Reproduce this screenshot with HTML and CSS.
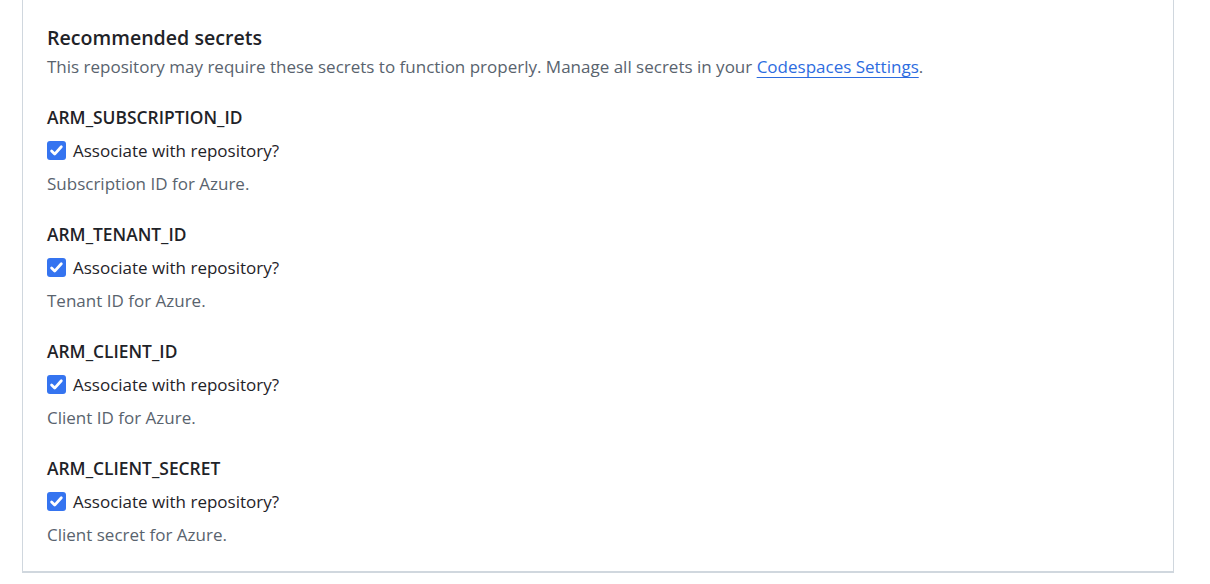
FILE: index.html
```html
<!DOCTYPE html>
<html lang="en">
<head>
<meta charset="utf-8">
<title>Recommended secrets</title>
<link rel="stylesheet" href="styles.css">
</head>
<body>
<div class="panel">
  <section class="secrets">
    <h3 class="secrets-title">Recommended secrets</h3>
    <p class="secrets-desc">This repository may require these secrets to function properly. Manage all secrets in your <a class="link" href="#">Codespaces Settings</a>.</p>
    <ul class="secret-list">
      <li class="secret">
        <div class="secret-name">ARM_SUBSCRIPTION_ID</div>
        <label class="check-row"><span class="checkbox"><svg viewBox="0 0 19 19" width="19" height="19"><path d="M4.6 10l3.1 3.1 6.6-7.4" fill="none" stroke="#fff" stroke-width="2.8" stroke-linecap="round" stroke-linejoin="round"/></svg></span><span class="check-label">Associate with repository?</span></label>
        <div class="secret-help">Subscription ID for Azure.</div>
      </li>
      <li class="secret">
        <div class="secret-name">ARM_TENANT_ID</div>
        <label class="check-row"><span class="checkbox"><svg viewBox="0 0 19 19" width="19" height="19"><path d="M4.6 10l3.1 3.1 6.6-7.4" fill="none" stroke="#fff" stroke-width="2.8" stroke-linecap="round" stroke-linejoin="round"/></svg></span><span class="check-label">Associate with repository?</span></label>
        <div class="secret-help">Tenant ID for Azure.</div>
      </li>
      <li class="secret">
        <div class="secret-name">ARM_CLIENT_ID</div>
        <label class="check-row"><span class="checkbox"><svg viewBox="0 0 19 19" width="19" height="19"><path d="M4.6 10l3.1 3.1 6.6-7.4" fill="none" stroke="#fff" stroke-width="2.8" stroke-linecap="round" stroke-linejoin="round"/></svg></span><span class="check-label">Associate with repository?</span></label>
        <div class="secret-help">Client ID for Azure.</div>
      </li>
      <li class="secret">
        <div class="secret-name">ARM_CLIENT_SECRET</div>
        <label class="check-row"><span class="checkbox"><svg viewBox="0 0 19 19" width="19" height="19"><path d="M4.6 10l3.1 3.1 6.6-7.4" fill="none" stroke="#fff" stroke-width="2.8" stroke-linecap="round" stroke-linejoin="round"/></svg></span><span class="check-label">Associate with repository?</span></label>
        <div class="secret-help">Client secret for Azure.</div>
      </li>
    </ul>
  </section>
</div>
</body>
</html>
```
FILE: styles.css
```css
html, body {
  margin: 0;
  padding: 0;
  background: #ffffff;
}
body {
  font-family: "Open Sans", "Noto Sans", sans-serif;
  color: #1f2328;
  height: 584px;
  overflow: hidden;
}
.panel {
  margin-left: 22px;
  width: 1152px;
  border-left: 1px solid #d0d7de;
  border-right: 1px solid #d0d7de;
  border-bottom: 2px solid #d0d7de;
  height: 573px;
  box-sizing: border-box;
  padding: 23px 24px 0 24px;
}
.secrets-title {
  margin: 0;
  font-size: 19.6px;
  line-height: 30px;
  font-weight: 600;
}
.secrets-desc {
  margin: 2px 0 0 0;
  font-size: 17px;
  line-height: 24px;
  color: #59636e;
}
.link {
  color: #2d6cdf;
  text-decoration: underline;
  text-decoration-thickness: 1px;
  text-underline-offset: 4px;
}
.secret-list {
  list-style: none;
  margin: 26px 0 0 0;
  padding: 0;
  display: flex;
  flex-direction: column;
  gap: 26px;
}
.secret-name {
  font-size: 17.4px;
  line-height: 24px;
  font-weight: 600;
}
.check-row {
  margin-top: 9px;
  display: flex;
  align-items: center;
  gap: 7px;
  height: 24px;
  font-size: 17px;
}
.checkbox {
  width: 19px;
  height: 19px;
  border-radius: 3px;
  background: #3574f0;
  display: flex;
}
.secret-help {
  margin-top: 10px;
  font-size: 17px;
  line-height: 24px;
  color: #59636e;
}
```
